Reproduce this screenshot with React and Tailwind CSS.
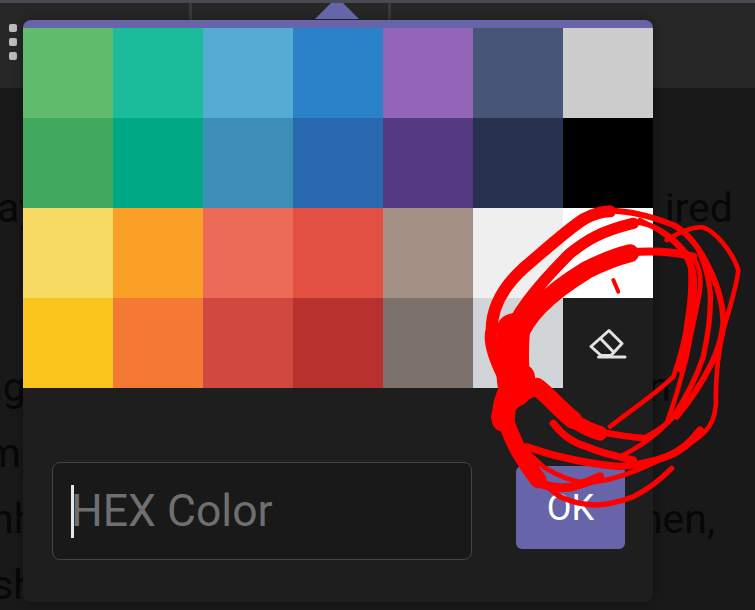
const colors = [
  "#61BD6D", "#1ABC9C", "#54ACD2", "#2C82C9", "#9365B8", "#475577", "#CCCCCC",
  "#41A85F", "#00A885", "#3D8EB9", "#2969B0", "#553982", "#28324E", "#000000",
  "#F7DA64", "#FBA026", "#EB6B56", "#E25041", "#A38F84", "#EFEFEF", "#FFFFFF",
  "#FAC51C", "#F37934", "#D14841", "#B8312F", "#7C706B", "#D1D5D8",
];

// what is left visible of the page text around the popup
const rows = [
  { left: "ay", right: "ired", cls: "mb-[113px] pr-[22px]", leftCls: "-ml-[3px]" },
  { left: "ng", right: "n", cls: "pr-[84px]", leftCls: "-ml-[20px]" },
  { left: "m,", right: "", cls: "", leftCls: "-ml-[15px]" },
  { left: "nh", right: "hen,", cls: "pr-[40px]", leftCls: "-ml-[9px]" },
  { left: "sh", right: "", cls: "", leftCls: "-ml-[8px]" },
];

// hand drawn loops, traced at 3x over the eraser cell
function Scribble() {
  return (
    <svg className="absolute left-[460px] top-[190px] pointer-events-none" width="295" height="330" viewBox="0 0 885 990" fill="none" stroke="#ff0000" strokeLinecap="round" strokeLinejoin="round">
      <path strokeWidth="36" d="M130 560C100 500 85 450 95 420C95 350 130 290 190 235C250 185 320 120 370 88C400 72 425 65 450 64" />
      <path strokeWidth="18" d="M450 62C520 62 590 85 640 105C680 125 720 175 745 230C770 280 790 340 790 400C785 450 770 490 755 520C730 570 700 620 650 680" />
      <path strokeWidth="34" d="M140 440C170 370 220 300 330 190C380 150 420 125 520 100" />
      <path strokeWidth="16" d="M520 95C580 100 630 130 680 190C700 225 710 270 700 330C690 400 680 470 660 540" />
      <path strokeWidth="54" d="M170 450C200 380 250 320 380 240C430 215 470 200 510 190" />
      <path strokeWidth="24" d="M510 187C560 183 630 182 700 200" />
      <path strokeWidth="100" d="M160 420C155 480 155 540 165 600" />
      <path strokeWidth="70" d="M130 690C130 630 150 590 190 560" />
      <path strokeWidth="14" d="M620 150C660 125 700 110 730 112C765 125 815 180 835 240C830 290 810 350 790 420C775 490 765 560 768 640C765 680 750 710 735 725C700 760 650 790 560 828C500 855 440 875 380 878C330 875 290 855 250 830C210 795 175 760 150 730" />
      <path strokeWidth="16" d="M635 835C600 870 560 900 520 920C480 935 440 945 400 945C360 942 330 935 300 920C270 900 250 880 230 860C200 820 175 775 150 730" />
      <path strokeWidth="26" d="M240 880C280 895 310 895 340 890C370 882 395 872 420 860" />
      <path strokeWidth="14" d="M450 710C520 655 590 610 640 560C660 500 675 450 680 400C690 340 695 280 690 230C675 185 640 140 540 90" />
      <path strokeWidth="14" d="M480 800C540 770 590 735 620 700C650 620 665 560 680 500C695 420 710 360 720 300C725 260 715 225 700 200" />
      <path strokeWidth="16" d="M560 740C590 725 620 705 640 680C680 620 710 560 730 500C745 430 755 360 750 300C745 260 735 225 720 190" />
      <path strokeWidth="54" d="M120 680C150 630 190 600 230 590C270 620 300 660 340 690" />
      <path strokeWidth="44" d="M340 692C370 710 395 722 420 730" />
      <path strokeWidth="20" d="M420 725C470 735 515 742 560 745" />
      <path strokeWidth="22" d="M200 770C230 780 265 792 300 800C360 815 420 825 480 830C530 825 580 815 620 800C660 785 695 755 720 720" />
      <path strokeWidth="22" d="M280 700C310 740 345 760 380 770C425 790 470 800 520 810" />
      <path strokeWidth="50" d="M140 700C165 770 190 810 235 870" />
      <path strokeWidth="12" d="M460 270L475 305" />
    </svg>
  );
}

function EraserIcon() {
  return (
    <svg width="38" height="34" viewBox="0 0 38 34" fill="none" stroke="#e2e2e2" strokeWidth="3" strokeLinejoin="round" strokeLinecap="round">
      <path d="M20 3.500L33 16.500L22 28.500H12L2 19.500L20 3.500Z" />
      <path d="M11.500 11.500L24.500 25" />
      <path d="M9.500 30H36" />
    </svg>
  );
}

export default function App() {
  return (
    <div className="relative h-[610px] w-[755px] overflow-hidden bg-[#191919] font-['Roboto',sans-serif]">
      <div className="relative z-10 h-[3px] bg-[#4a4b52]" />
      <div className="flex h-[85px] bg-[#272727]">
        <div className="flex h-full w-[192px] flex-col gap-[6px] border-r-[3px] border-[#3a3a3a] pl-[9px] pt-[21px]">
          <div className="h-2 w-2 rounded-[2px] bg-[#bdbdbd]" />
          <div className="h-2 w-2 rounded-[2px] bg-[#bdbdbd]" />
          <div className="h-2 w-2 rounded-[2px] bg-[#bdbdbd]" />
        </div>
        <div className="h-full w-[199px] border-r-[3px] border-[#3a3a3a]" />
      </div>

      <div className="pt-[87px] text-[41px] leading-[66px] text-[#070707]">
        {rows.map((row) => (
          <div key={row.left} className={`flex justify-between ${row.cls}`}>
            <span className={row.leftCls}>{row.left}</span>
            <span>{row.right}</span>
          </div>
        ))}
      </div>

      <div className="absolute left-[23px] top-[20px] flex h-[582px] w-[630px] flex-col rounded-lg border-t-8 border-[#6764a9] bg-[#1e1e1e] shadow-[0_0_12px_rgba(0,0,0,0.35)]">
        <div className="absolute -top-[31px] left-[292px] h-0 w-0 border-x-[22px] border-b-[22px] border-x-transparent border-b-[#6764a9]" />
        <div className="grid grid-cols-[repeat(7,90px)] auto-rows-[90px]">
          {colors.map((c) => (
            <div key={c} style={{ backgroundColor: c }} />
          ))}
          <div className="flex items-center justify-center pt-[2px]">
            <EraserIcon />
          </div>
        </div>
        <div className="mt-[74px] flex items-start gap-[44px] pl-[29px]">
          <div className="flex h-[98px] w-[420px] items-center rounded-lg border-[1.5px] border-[#454545] bg-[#191919] pl-[18px] text-[44.5px] text-[#6f6f6f]">
            <span className="h-[53px] w-[3px] shrink-0 bg-[#e6e6e6]" />
            <span className="-ml-[3px]">HEX Color</span>
          </div>
          <div className="mt-[4px] flex h-[83px] w-[109px] items-center justify-center rounded-md bg-[#6764a9] text-[36px] text-white">
            OK
          </div>
        </div>
      </div>

      <Scribble />
    </div>
  );
}
